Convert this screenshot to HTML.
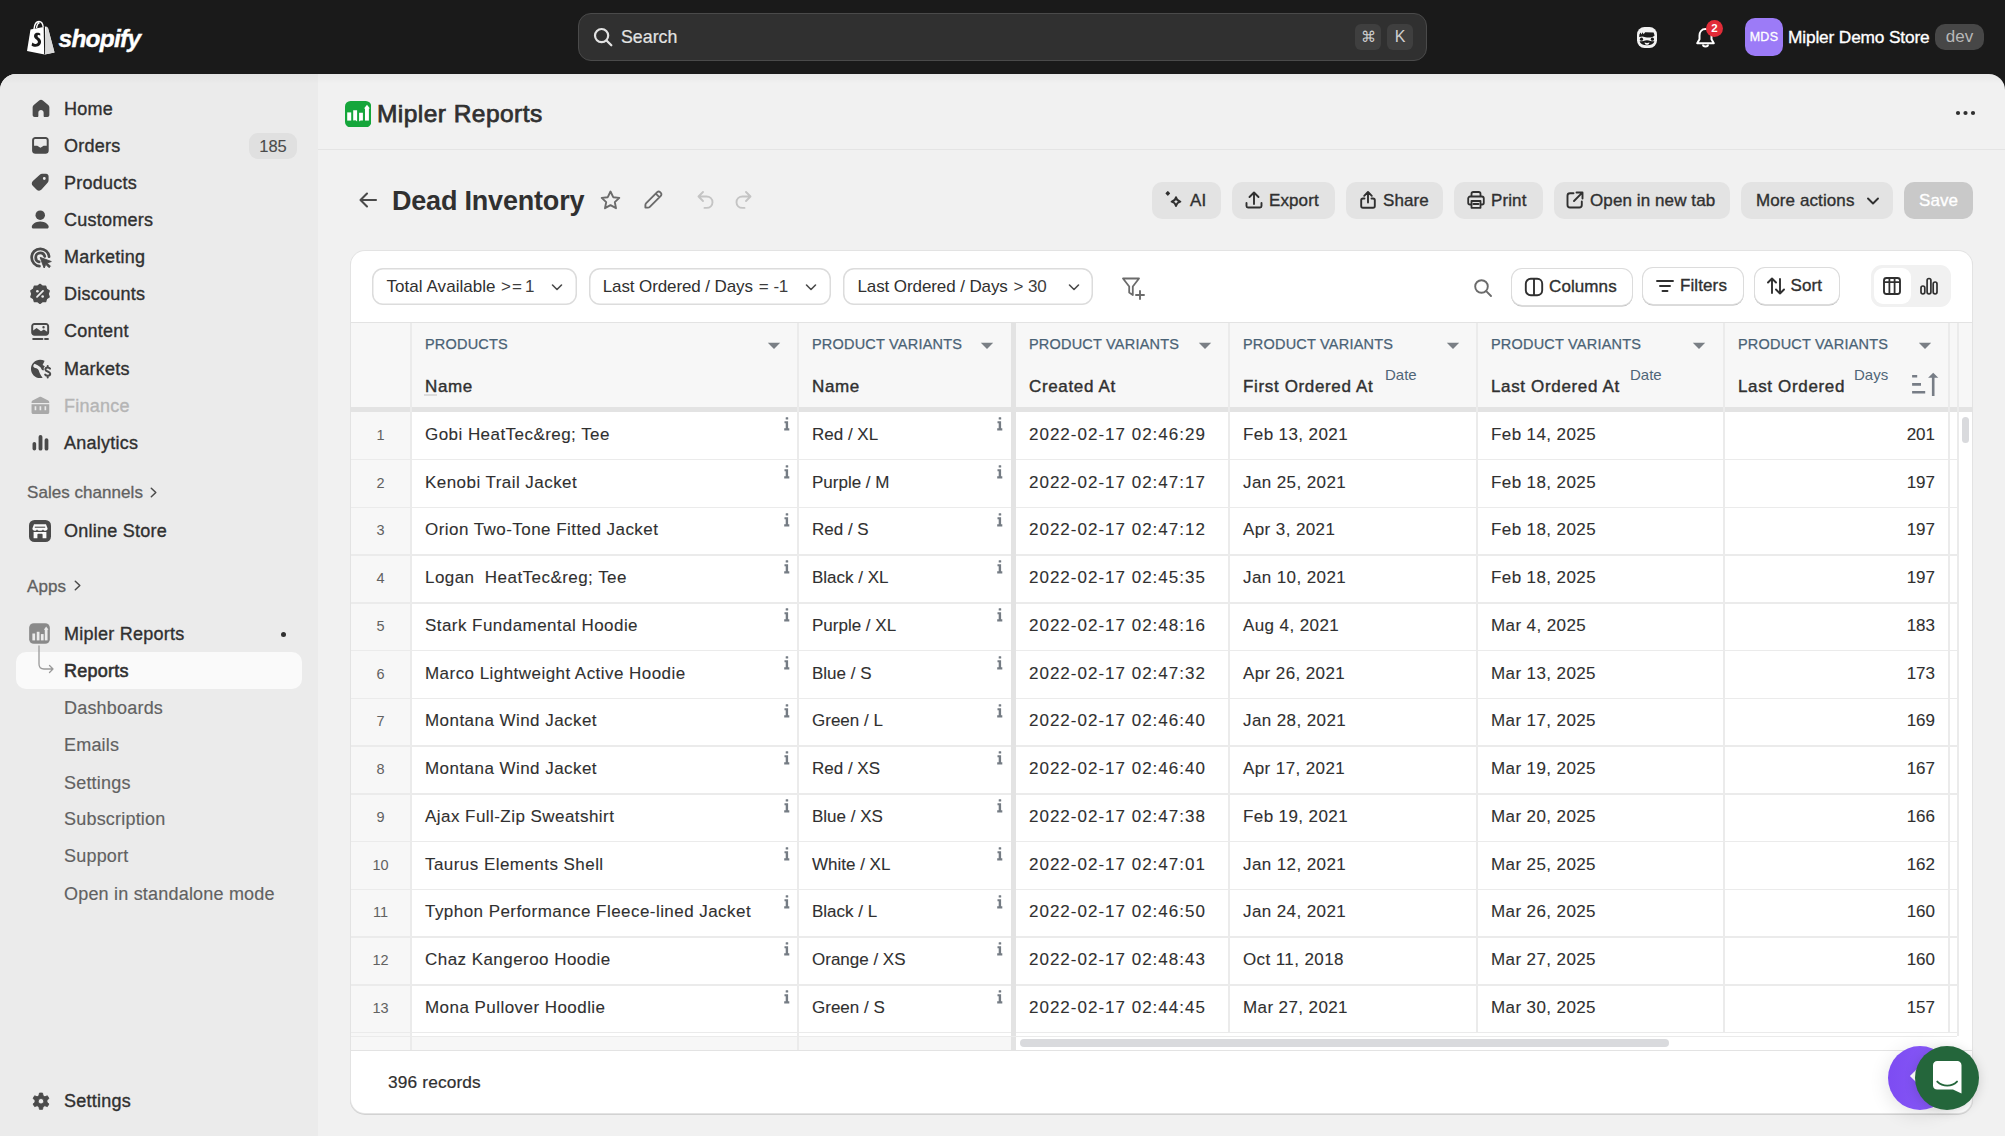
<!DOCTYPE html>
<html><head><meta charset="utf-8">
<style>
*{box-sizing:border-box;margin:0;padding:0}
html,body{width:2005px;height:1136px;overflow:hidden;background:#1a1a1a;font-family:"Liberation Sans",sans-serif;color:#303030}
.abs{position:absolute}
#top{position:absolute;left:0;top:0;width:2005px;height:74px;background:#1a1a1a}
#frame{position:absolute;left:0;top:74px;width:2005px;height:1062px;background:#f1f1f1;border-radius:16px 16px 0 0;overflow:hidden}
#side{position:absolute;left:0;top:0;width:318px;height:1062px;background:#ebebeb}
.nav{position:absolute;left:0;height:37px;line-height:37px;font-size:18px;color:#303030;-webkit-text-stroke:0.35px #303030;white-space:nowrap}
.nav .lbl{position:absolute;left:64px;top:0.8px;letter-spacing:0.25px}
.nav svg{position:absolute;left:29.5px;top:7px;width:22px;height:22px}
.sub{position:absolute;left:64px;height:37px;line-height:38.8px;font-size:18px;letter-spacing:0.2px;color:#616161;white-space:nowrap;-webkit-text-stroke:0.15px #616161}
.sec{position:absolute;left:27px;height:30px;line-height:30px;font-size:17px;color:#616161;-webkit-text-stroke:0.3px #616161;white-space:nowrap;letter-spacing:0.05px}
.btn{position:absolute;top:182px;height:37px;border-radius:10px;background:#e3e3e3;color:#303030;font-size:17px;-webkit-text-stroke:0.35px #303030;white-space:nowrap}
.btn span{position:absolute;top:0;line-height:37px;letter-spacing:0.1px}
.btn svg{position:absolute;top:6.7px}
.pill{position:absolute;top:17px;height:37px;border-radius:11px;box-shadow:inset 0 0 0 1.5px #dcdcdc;background:#fff;color:#303030;font-size:17px;white-space:nowrap}
.pill span{position:absolute;top:0;line-height:37px;letter-spacing:-0.1px}
.pill .op{letter-spacing:-0.3px;color:#3d3d3d}
.pill svg{position:absolute;top:11.5px}
.tb{position:absolute;top:17.5px;height:36px;border-radius:10px;background:#fff;box-shadow:0 0 0 1px #dcdcdc, 0 1px 0 0.6px #b5b5b5;color:#303030;font-size:17px;-webkit-text-stroke:0.35px #303030;white-space:nowrap}
.tb span{position:absolute;top:0;line-height:36px;letter-spacing:0.1px}
.tb svg{position:absolute;top:7px}
.rn{position:absolute;left:0;width:59px;text-align:center;line-height:36px;font-size:14.5px;color:#616161}
.td{position:absolute;line-height:36px;font-size:17px;color:#303030;white-space:nowrap;-webkit-text-stroke:0.1px #303030}
.nm{letter-spacing:0.45px}
.dt{letter-spacing:1.0px}
.dd{letter-spacing:0.4px}
.ii{position:absolute;fill:#757c84}
.hl{position:absolute;left:0;width:1606px;height:1.5px;background:#ebebeb}
.vl{position:absolute;width:1.5px;background:#ebebeb}
.th1{position:absolute;line-height:36px;font-size:14.5px;color:#4a6275;letter-spacing:0.2px;-webkit-text-stroke:0.25px #4a6275;white-space:nowrap}
.th2{position:absolute;line-height:36px;font-size:17px;color:#303030;-webkit-text-stroke:0.4px #303030;letter-spacing:0.65px;white-space:nowrap}
.sup{position:absolute;line-height:36px;font-size:15px;color:#4f6678;white-space:nowrap;letter-spacing:0px}
</style></head>
<body>
<div id="top">
  <svg class="abs" style="left:25px;top:20px" width="32" height="35" viewBox="0 0 32 35">
    <path d="M2 31 L5.5 9.5 L21 6.5 L23 8 L29.5 32.5 L19.5 34.5 Z" fill="#fff"/>
    <path d="M19.3 6.6 L19.8 34.3" stroke="#1a1a1a" stroke-width="1.3" fill="none"/>
    <path d="M21 6.5 L23 8 L29.5 32.5 L20 34.4 Z" fill="#d8d8d8"/>
    <path d="M9 9 C9.5 4 11.5 1.5 14 1.5 C16.5 1.5 17.8 3.5 18.2 7 M11.5 8 C12 4.5 13.2 3 14.5 3" stroke="#fff" stroke-width="1.4" fill="none"/>
    <path d="M15.2 13.6 C14.5 12.8 12.9 12.4 11.5 12.8 C9.2 13.5 8.4 16 9.5 17.8 C10.4 19.2 12.6 19.8 12.9 21.6 C13.2 23.4 11.2 24.4 9.5 23.8 C8.6 23.5 7.9 23 7.4 22.4 L6.5 25.4 C7.3 26.3 9.2 26.9 10.8 26.8 C14.2 26.6 16.4 24.2 16 21 C15.7 18.6 13.2 17.6 12.6 16.4 C12.2 15.5 12.8 14.9 13.8 15 C14.5 15 15 15.3 15.3 15.6 Z" fill="#1a1a1a"/>
  </svg>
  <div class="abs" style="left:58.5px;top:20.5px;font-size:24.5px;line-height:36px;font-weight:bold;font-style:italic;color:#fff;letter-spacing:-0.75px;-webkit-text-stroke:0.4px #fff">shopify</div>

  <div class="abs" style="left:578px;top:13px;width:849px;height:48px;border-radius:13px;background:#303030;border:1.5px solid #4a4a4a"></div>
  <svg class="abs" style="left:593px;top:27px" width="21" height="21" viewBox="0 0 21 21"><circle cx="8.6" cy="8.6" r="6.6" stroke="#e3e3e3" stroke-width="2.2" fill="none"/><path d="M13.5 13.5 L18.3 18.3" stroke="#e3e3e3" stroke-width="2.3" stroke-linecap="round"/></svg>
  <div class="abs" style="left:621px;top:19px;line-height:36px;font-size:17.8px;color:#e3e3e3;-webkit-text-stroke:0.2px #e3e3e3">Search</div>
  <div class="abs" style="left:1355px;top:24px;width:26px;height:26px;border-radius:6px;background:#3f3f3f;color:#d0d0d0;font-size:15px;line-height:26px;text-align:center">&#8984;</div>
  <div class="abs" style="left:1387px;top:24px;width:26px;height:26px;border-radius:6px;background:#3f3f3f;color:#d0d0d0;font-size:16px;line-height:26px;text-align:center">K</div>

  <svg class="abs" style="left:1637px;top:26.5px" width="20" height="21" viewBox="0 0 20 21"><rect x="0" y="0" width="20" height="21" rx="7.5" fill="#f2f2f2"/><path d="M2.2 10 L2.4 7.6 L3.6 5.4 L4.5 7.4 L5.6 5.3 L6.6 7.2 L8.2 5.2 L16.6 5.5 L17.6 8.4 C15.5 10.6 11.5 11.1 8.6 10.2 L5.5 9.6 Z" fill="#1a1a1a"/><circle cx="4.5" cy="12.2" r="1.6" fill="#1a1a1a"/><circle cx="15.4" cy="12.2" r="1.6" fill="#1a1a1a"/><path d="M2.6 14.3 C5 14.6 7.3 13.4 10 13.2 C12.7 13.4 15 14.6 17.4 14.3 C16.8 17 14 18.3 10 18.3 C6 18.3 3.2 17 2.6 14.3 Z" fill="#1a1a1a"/><path d="M7.5 15.5 C8.5 16 11.5 16 12.5 15.5 C12.3 17.1 11.3 17.8 10 17.8 C8.7 17.8 7.7 17.1 7.5 15.5 Z" fill="#f2f2f2"/></svg>
  <svg class="abs" style="left:1694px;top:26px" width="24" height="24" viewBox="0 0 24 24">
    <path d="M11.5 3 C7.5 3 5.5 6.3 5.5 9.5 L5.5 13.2 L3.2 17.2 L19.8 17.2 L17.5 13.2 L17.5 9.5 C17.5 6.3 15.5 3 11.5 3 Z" fill="none" stroke="#fff" stroke-width="2" stroke-linejoin="round"/>
    <path d="M9 18.5 C9 21 14 21 14 18.5" fill="none" stroke="#fff" stroke-width="2"/>
  </svg>
  <div class="abs" style="left:1706px;top:20px;width:17px;height:17px;border-radius:50%;background:#e22c38;border:0px solid #1a1a1a;color:#fff;font-size:11.5px;font-weight:bold;line-height:17px;text-align:center">2</div>
  <div class="abs" style="left:1745px;top:18px;width:38px;height:38px;border-radius:10px;background:#9c7bf7;color:#fff;font-size:12.5px;line-height:38px;text-align:center;letter-spacing:0.3px;-webkit-text-stroke:0.3px #fff">MDS</div>
  <div class="abs" style="left:1788px;top:19px;line-height:36px;font-size:17.3px;color:#fff;-webkit-text-stroke:0.35px #fff;white-space:nowrap;letter-spacing:-0.15px">Mipler Demo Store</div>
  <div class="abs" style="left:1935px;top:24px;width:49px;height:26px;border-radius:10px;background:#474747;color:#b8b8b8;font-size:17px;line-height:26px;text-align:center">dev</div>
</div>
<div id="frame">
  <div id="side">
    <!-- centers (page y): 108.8 + 37.12*i ; frame top 74 -->
    <div class="nav" style="top:16px"><svg viewBox="0 0 20 20"><path d="M10 2.6 C9.4 2.6 8.8 2.8 8.3 3.2 L3.2 7.6 C2.7 8.1 2.4 8.7 2.4 9.4 L2.4 16.4 C2.4 17.4 3.2 18.2 4.2 18.2 L6.6 18.2 C7.2 18.2 7.6 17.7 7.6 17.2 L7.6 14.3 C7.6 13 8.7 11.9 10 11.9 C11.3 11.9 12.4 13 12.4 14.3 L12.4 17.2 C12.4 17.7 12.8 18.2 13.4 18.2 L15.8 18.2 C16.8 18.2 17.6 17.4 17.6 16.4 L17.6 9.4 C17.6 8.7 17.3 8.1 16.8 7.6 L11.7 3.2 C11.2 2.8 10.6 2.6 10 2.6 Z" fill="#4a4a4a"/></svg><span class="lbl">Home</span></div>
    <div class="nav" style="top:53.2px"><svg viewBox="0 0 20 20"><path d="M4.8 2.7 L14.2 2.7 C15.8 2.7 17 3.9 17 5.5 L17 15.2 C17 16.8 15.8 18 14.2 18 L4.8 18 C3.2 18 1.9 16.8 1.9 15.2 L1.9 5.5 C1.9 3.9 3.2 2.7 4.8 2.7 Z M3.7 10.6 L6.6 10.6 L9.5 12.6 L12.4 10.6 L15.2 10.6 L15.2 5.6 C15.2 5 14.7 4.5 14.1 4.5 L4.9 4.5 C4.3 4.5 3.7 5 3.7 5.6 Z" fill="#4a4a4a" fill-rule="evenodd"/></svg><span class="lbl">Orders</span>
      <div class="abs" style="left:249px;top:5.5px;width:48px;height:26px;border-radius:9px;background:#e0e0e0;color:#4a4a4a;font-size:16.5px;line-height:26px;text-align:center;-webkit-text-stroke:0.1px #4a4a4a">185</div></div>
    <div class="nav" style="top:90.3px"><svg viewBox="0 0 20 20"><path d="M11 2.6 L14.6 2.6 C15.9 2.6 16.9 3.6 16.9 4.9 L16.9 8.5 C16.9 9.3 16.6 10 16 10.6 L10.5 16.9 C9.3 18.2 7.3 18.2 6.1 17 L2.5 13.4 C1.3 12.2 1.3 10.2 2.6 9 L8.9 3.5 C9.5 2.9 10.2 2.6 11 2.6 Z M13 5.5 A1.3 1.3 0 1 0 13 8.1 A1.3 1.3 0 1 0 13 5.5 Z" fill="#4a4a4a" fill-rule="evenodd"/></svg><span class="lbl">Products</span></div>
    <div class="nav" style="top:127.4px"><svg viewBox="0 0 20 20"><circle cx="9.3" cy="6.5" r="4.3" fill="#4a4a4a"/><path d="M9.3 12.2 C4.8 12.2 1.6 14.8 1.6 17.3 C1.6 18.1 2.2 18.7 3 18.7 L15.6 18.7 C16.4 18.7 17 18.1 17 17.3 C17 14.8 13.8 12.2 9.3 12.2 Z" fill="#4a4a4a"/></svg><span class="lbl">Customers</span></div>
    <div class="nav" style="top:164.5px"><svg viewBox="0 0 20 20"><path d="M8.6 18.3 C4.6 17.9 1.5 14.5 1.5 10.4 C1.5 6 5 2.5 9.4 2.5 C13.5 2.5 16.9 5.6 17.3 9.6" stroke="#4a4a4a" stroke-width="2.5" fill="none" stroke-linecap="round"/><path d="M8.3 14.5 C6.5 14.1 5.2 12.5 5.2 10.5 C5.2 8.2 7 6.3 9.3 6.3 C11.3 6.3 12.9 7.6 13.4 9.4" stroke="#4a4a4a" stroke-width="2.5" fill="none" stroke-linecap="round"/><path d="M9.2 10.3 L19.4 14.1 L15.6 15.4 L18.6 18.4 L17.3 19.7 L14.3 16.7 L12.9 20.3 Z" fill="#4a4a4a" stroke="#4a4a4a" stroke-width="0.8" stroke-linejoin="round"/></svg><span class="lbl">Marketing</span></div>
    <div class="nav" style="top:201.6px"><svg viewBox="0 0 20 20"><path d="M9.1 1.3 L11.4 3 L14.2 2.9 L15 5.6 L17.4 7.2 L16.5 9.9 L17.4 12.6 L15 14.2 L14.2 16.9 L11.4 16.8 L9.1 18.5 L6.8 16.8 L4 16.9 L3.2 14.2 L0.8 12.6 L1.7 9.9 L0.8 7.2 L3.2 5.6 L4 2.9 L6.8 3 Z" fill="#4a4a4a" stroke="#4a4a4a" stroke-width="1.3" stroke-linejoin="round"/><path d="M6.4 12.6 L11.8 7.2" stroke="#ebebeb" stroke-width="1.7" stroke-linecap="round"/><circle cx="6.7" cy="7.5" r="1.2" fill="#ebebeb"/><circle cx="11.5" cy="12.3" r="1.2" fill="#ebebeb"/></svg><span class="lbl">Discounts</span></div>
    <div class="nav" style="top:238.7px"><svg viewBox="0 0 20 20"><path d="M4 2.7 L14.5 2.7 C16.1 2.7 17.4 4 17.4 5.6 L17.4 11.4 C17.4 13 16.1 14.3 14.5 14.3 L4 14.3 C2.4 14.3 1.1 13 1.1 11.4 L1.1 5.6 C1.1 4 2.4 2.7 4 2.7 Z M2.9 9.6 L6 7.2 L10 10.2 L12.6 8.6 L15.6 10.6 L15.6 5.6 C15.6 5 15.1 4.5 14.5 4.5 L4 4.5 C3.4 4.5 2.9 5 2.9 5.6 Z M12.3 5.5 A1.1 1.1 0 1 0 12.3 7.7 A1.1 1.1 0 1 0 12.3 5.5 Z" fill="#4a4a4a" fill-rule="evenodd"/><rect x="2" y="16.4" width="10.2" height="1.7" rx="0.85" fill="#4a4a4a"/><rect x="12.8" y="16.4" width="4.4" height="1.7" rx="0.85" fill="#4a4a4a"/></svg><span class="lbl">Content</span></div>
    <div class="nav" style="top:275.8px"><svg viewBox="0 0 20 20"><path d="M13.2 3.4 C12 2.8 10.6 2.5 9.2 2.5 C4.6 2.5 0.9 6.2 0.9 10.8 C0.9 15.4 4.6 19.1 9.2 19.1 C10 19.1 10.8 19 11.5 18.8 C10.5 17.6 9.7 16.3 9 15 C8 13 8.4 11.8 7 10.8 C5.6 9.8 3.6 10.2 3 8.6 C2.8 7.8 3.4 6.8 4.2 6.2 C6 7.4 8 7.8 9.5 9.4 C10.5 10.4 10.2 11.8 11.5 12 L12.8 12 C12.2 10.8 12.4 9.2 13.6 8.4 L11.4 7.2 C12 6 13 4.6 13.2 3.4 Z" fill="#4a4a4a"/><path d="M18.2 10.6 C17.7 9.9 17 9.6 16.1 9.6 C14.9 9.6 14 10.3 14 11.3 C14 13.4 18.4 12.9 18.4 15.3 C18.4 16.4 17.4 17.1 16.1 17.1 C15.1 17.1 14.3 16.7 13.8 16 M16.1 8.2 L16.1 9.6 M16.1 17.1 L16.1 18.6" stroke="#4a4a4a" stroke-width="1.8" fill="none" stroke-linecap="round"/></svg><span class="lbl">Markets</span></div>
    <div class="nav" style="top:312.9px;color:#b5b5b5;-webkit-text-stroke:0.35px #b5b5b5"><svg viewBox="0 0 20 20"><path d="M9.4 2.5 C9.7 2.5 10 2.6 10.3 2.7 L16.6 6 C17.1 6.3 17.5 6.8 17.5 7.4 L17.5 8.2 L1.4 8.2 L1.4 7.4 C1.4 6.8 1.7 6.3 2.3 6 L8.5 2.7 C8.8 2.6 9.1 2.5 9.4 2.5 Z" fill="#a9a9a9"/><path d="M1.4 9.4 L17.5 9.4 L17.5 16.6 C17.5 17.5 16.8 18.2 15.9 18.2 L3 18.2 C2.1 18.2 1.4 17.5 1.4 16.6 Z M4.2 11.2 L4.2 14.8 L5.7 14.8 L5.7 11.2 Z M8.7 11.2 L8.7 14.8 L10.2 14.8 L10.2 11.2 Z M13.2 11.2 L13.2 14.8 L14.7 14.8 L14.7 11.2 Z" fill="#a9a9a9" fill-rule="evenodd"/></svg><span class="lbl">Finance</span></div>
    <div class="nav" style="top:350px"><svg viewBox="0 0 20 20"><rect x="2.3" y="10" width="3.3" height="7.8" rx="1.65" fill="#4a4a4a"/><rect x="7.8" y="3.6" width="3.5" height="14.2" rx="1.75" fill="#4a4a4a"/><rect x="13.3" y="6.5" width="3.4" height="11.3" rx="1.7" fill="#4a4a4a"/></svg><span class="lbl">Analytics</span></div>

    <div class="sec" style="top:403.7px">Sales channels</div><svg class="abs" style="left:150px;top:413.4px" width="8" height="11" viewBox="0 0 8 11"><path d="M1.3 1.2 L5.8 5.5 L1.3 9.8" stroke="#4a4a4a" stroke-width="1.5" fill="none" stroke-linecap="round" stroke-linejoin="round"/></svg>
    <div class="nav" style="top:438px"><svg viewBox="0 0 22 22" style="left:28.8px;top:7.5px;width:22px;height:22px"><rect x="0" y="0" width="22" height="22" rx="5.5" fill="#4a4a4a"/><path d="M5 4.3 L17 4.3 L18.6 8.6 C18.6 9.9 17.6 10.8 16.4 10.8 C15.3 10.8 14.4 10.1 14 9.2 C13.6 10.1 12.6 10.8 11 10.8 C9.4 10.8 8.4 10.1 8 9.2 C7.6 10.1 6.7 10.8 5.6 10.8 C4.4 10.8 3.4 9.9 3.4 8.6 Z" fill="#fafafa"/><path d="M5.8 7.2 L16.2 7.2" stroke="#4a4a4a" stroke-width="1.1"/><path d="M4.6 12 L17.4 12 L17.4 18.3 L13.6 18.3 L13.6 14.6 C13.6 14.1 13.2 13.8 12.8 13.8 L9.2 13.8 C8.8 13.8 8.4 14.1 8.4 14.6 L8.4 18.3 L4.6 18.3 Z" fill="#fafafa"/></svg><span class="lbl">Online Store</span></div>

    <div class="sec" style="top:497.5px">Apps</div><svg class="abs" style="left:74.2px;top:506.20000000000005px" width="8" height="11" viewBox="0 0 8 11"><path d="M1.3 1.2 L5.8 5.5 L1.3 9.8" stroke="#4a4a4a" stroke-width="1.5" fill="none" stroke-linecap="round" stroke-linejoin="round"/></svg>
    <div class="nav" style="top:541px"><svg viewBox="0 0 20 20" style="left:28px;top:7px;width:23px;height:23px"><rect x="1" y="1" width="18" height="18" rx="4" fill="#8a8a8a"/><rect x="3.8" y="10" width="2.4" height="6" fill="#ebebeb"/><rect x="7.6" y="8.5" width="2.4" height="7.5" fill="#ebebeb"/><rect x="11.2" y="10.5" width="2.4" height="5.5" fill="#ebebeb"/><rect x="14.6" y="6" width="2.4" height="10" fill="#ebebeb"/><path d="M13.8 6.8 L15.8 4 L17.8 6.8 Z" fill="#ebebeb"/></svg><span class="lbl">Mipler Reports</span>
      <div class="abs" style="left:281px;top:17px;width:5px;height:5px;border-radius:50%;background:#303030"></div></div>
    <div class="abs" style="left:16px;top:578px;width:286px;height:37px;border-radius:10px;background:#fafafa"></div>
    <svg class="abs" style="left:36px;top:570px" width="20" height="30" viewBox="0 0 20 30"><path d="M3 2 L3 20 C3 23 5 25 8 25 L17 25 M13.5 21.5 L17 25 L13.5 28.5" stroke="#9a9a9a" stroke-width="1.3" fill="none" stroke-linecap="round" stroke-linejoin="round"/></svg>
    <div class="nav" style="top:578px;-webkit-text-stroke:0.6px #303030;color:#303030"><span class="lbl">Reports</span></div>
    <div class="sub" style="top:615.3px">Dashboards</div>
    <div class="sub" style="top:652.3px">Emails</div>
    <div class="sub" style="top:689.5px">Settings</div>
    <div class="sub" style="top:726.2px">Subscription</div>
    <div class="sub" style="top:763.2px">Support</div>
    <div class="sub" style="top:800.5px">Open in standalone mode</div>

    <div class="nav" style="top:1008.5px"><svg viewBox="0 0 20 20"><path d="M8.6 1.8 L11.4 1.8 L11.9 4.2 C12.5 4.4 13 4.7 13.5 5.1 L15.8 4.3 L17.2 6.7 L15.4 8.3 C15.5 8.9 15.5 9.5 15.4 10.1 L17.2 11.7 L15.8 14.1 L13.5 13.3 C13 13.7 12.5 14 11.9 14.2 L11.4 16.6 L8.6 16.6 L8.1 14.2 C7.5 14 7 13.7 6.5 13.3 L4.2 14.1 L2.8 11.7 L4.6 10.1 C4.5 9.5 4.5 8.9 4.6 8.3 L2.8 6.7 L4.2 4.3 L6.5 5.1 C7 4.7 7.5 4.4 8.1 4.2 Z M10 6.7 A2.5 2.5 0 1 0 10 11.7 A2.5 2.5 0 1 0 10 6.7 Z" fill="#4a4a4a" fill-rule="evenodd" transform="translate(0 1)" stroke="#4a4a4a" stroke-width="0.8" stroke-linejoin="round"/></svg><span class="lbl">Settings</span></div>
  </div>
</div>
<div class="abs topshade" style="left:0;top:74px;width:2005px;height:10px;border-radius:16px 16px 0 0;background:linear-gradient(rgba(0,0,0,0.035),rgba(0,0,0,0))"></div>
<div id="main" class="abs" style="left:0;top:0;width:2005px;height:1136px">
  <!-- app header -->
  <div class="abs" style="left:318px;top:148.5px;width:1687px;height:1px;background:#e4e4e4"></div>
  <svg class="abs" style="left:345px;top:100.8px" width="26.3" height="26.4" viewBox="0 0 26.3 26.4">
    <rect x="0" y="0" width="26.3" height="26.4" rx="5.5" fill="#15a63b"/>
    <rect x="2.2" y="11.4" width="4" height="8.2" fill="#fff"/>
    <path d="M8.2 9.2 L12.1 9.2 L12.1 20.5 L10.5 19.3 L8.2 19.6 Z" fill="#fff"/>
    <path d="M14.1 11.8 L17.9 11.8 L17.9 19.6 L15.6 19.4 L14.1 20.5 Z" fill="#fff"/>
    <rect x="20" y="7" width="3.9" height="12.6" fill="#fff"/>
    <path d="M19 7.6 L22 3.8 L24.9 7.6 Z" fill="#fff"/>
  </svg>
  <div class="abs" style="left:377px;top:96px;line-height:36px;font-size:24.5px;color:#303030;white-space:nowrap;letter-spacing:0.45px;-webkit-text-stroke:0.75px #303030">Mipler Reports</div>
  <svg class="abs" style="left:1954px;top:108px" width="24" height="10" viewBox="0 0 24 10"><circle cx="4" cy="5" r="2.1" fill="#303030"/><circle cx="11.5" cy="5" r="2.1" fill="#303030"/><circle cx="19" cy="5" r="2.1" fill="#303030"/></svg>

  <!-- title row -->
  <svg class="abs" style="left:357px;top:189px" width="22" height="22" viewBox="0 0 22 22"><path d="M19 11 L4 11 M10 4.5 L3.5 11 L10 17.5" stroke="#4a4a4a" stroke-width="2.1" fill="none" stroke-linecap="round" stroke-linejoin="round"/></svg>
  <div class="abs" style="left:392px;top:183px;line-height:36px;font-size:27px;font-weight:bold;color:#303030;white-space:nowrap;letter-spacing:-0.2px">Dead Inventory</div>
  <svg class="abs" style="left:599px;top:189px" width="23" height="22" viewBox="0 0 23 22"><path d="M11.5 2.5 L14.2 8.2 L20.3 8.9 L15.8 13.1 L17 19.2 L11.5 16.1 L6 19.2 L7.2 13.1 L2.7 8.9 L8.8 8.2 Z" fill="none" stroke="#6b6b6b" stroke-width="1.9" stroke-linejoin="round"/></svg>
  <svg class="abs" style="left:642px;top:189px" width="22" height="22" viewBox="0 0 22 22"><path d="M15.2 3.2 C16 2.4 17.3 2.4 18.1 3.2 L18.8 3.9 C19.6 4.7 19.6 6 18.8 6.8 L7.8 17.8 C7.3 18.3 6.6 18.6 5.9 18.6 L3.4 18.6 L3.4 16.1 C3.4 15.4 3.7 14.7 4.2 14.2 Z M13.8 4.7 L17.3 8.2" fill="none" stroke="#6b6b6b" stroke-width="1.9" stroke-linejoin="round"/></svg>
  <svg class="abs" style="left:695px;top:189px" width="22" height="22" viewBox="0 0 22 22"><path d="M8 3 L3.5 7.5 L8 12 M3.5 7.5 L11.5 7.5 C15 7.5 17.5 10 17.5 13.2 C17.5 16.4 15 18.9 11.5 18.9 L9.5 18.9" fill="none" stroke="#c4c4c4" stroke-width="1.9" stroke-linecap="round" stroke-linejoin="round"/></svg>
  <svg class="abs" style="left:732px;top:189px" width="22" height="22" viewBox="0 0 22 22"><path d="M14 3 L18.5 7.5 L14 12 M18.5 7.5 L10.5 7.5 C7 7.5 4.5 10 4.5 13.2 C4.5 16.4 7 18.9 10.5 18.9 L12.5 18.9" fill="none" stroke="#c4c4c4" stroke-width="1.9" stroke-linecap="round" stroke-linejoin="round"/></svg>

  <!-- action buttons -->
  <div class="btn" style="left:1152px;width:69px"><svg style="left:11px" width="24" height="22" viewBox="0 0 24 22"><rect x="3" y="2.6" width="3.6" height="3.6" rx="0.6" transform="rotate(45 4.8 4.4)" fill="#303030"/><path d="M13 8.2 C13.6 11 14.6 12 17.4 12.6 C14.6 13.2 13.6 14.2 13 17 C12.4 14.2 11.4 13.2 8.6 12.6 C11.4 12 12.4 11 13 8.2 Z" fill="none" stroke="#303030" stroke-width="1.9" stroke-linejoin="round"/></svg><span style="left:38px">AI</span></div>
  <div class="btn" style="left:1232px;width:103px"><svg style="left:11px" width="22" height="22" viewBox="0 0 22 22"><path d="M11 15 L11 3.5 M6.5 8 L11 3.5 L15.5 8 M3.5 14 L3.5 17 C3.5 17.8 4.2 18.5 5 18.5 L17 18.5 C17.8 18.5 18.5 17.8 18.5 17 L18.5 14" fill="none" stroke="#303030" stroke-width="1.9" stroke-linecap="round" stroke-linejoin="round"/></svg><span style="left:37px">Export</span></div>
  <div class="btn" style="left:1346px;width:97px"><svg style="left:11px" width="22" height="22" viewBox="0 0 22 22"><path d="M11 13.5 L11 3 M7.2 6.8 L11 3 L14.8 6.8 M7.5 9.5 L6 9.5 C5 9.5 4.2 10.3 4.2 11.3 L4.2 17 C4.2 18 5 18.8 6 18.8 L16 18.8 C17 18.8 17.8 18 17.8 17 L17.8 11.3 C17.8 10.3 17 9.5 16 9.5 L14.5 9.5" fill="none" stroke="#303030" stroke-width="1.9" stroke-linecap="round" stroke-linejoin="round"/></svg><span style="left:37px">Share</span></div>
  <div class="btn" style="left:1454px;width:89px"><svg style="left:11px" width="22" height="22" viewBox="0 0 22 22"><path d="M6.5 7.5 L6.5 4.8 C6.5 3.8 7.3 3 8.3 3 L13.7 3 C14.7 3 15.5 3.8 15.5 4.8 L15.5 7.5 M6.5 15.5 L5 15.5 C4 15.5 3.2 14.7 3.2 13.7 L3.2 9.5 C3.2 8.4 4.1 7.5 5.2 7.5 L16.8 7.5 C17.9 7.5 18.8 8.4 18.8 9.5 L18.8 13.7 C18.8 14.7 18 15.5 17 15.5 L15.5 15.5 M6.5 12 L15.5 12 L15.5 18.8 L6.5 18.8 Z M8.5 15 L13.5 15" fill="none" stroke="#303030" stroke-width="1.8" stroke-linecap="round" stroke-linejoin="round"/></svg><span style="left:37px">Print</span></div>
  <div class="btn" style="left:1554px;width:176px"><svg style="left:10px" width="22" height="22" viewBox="0 0 22 22"><path d="M9.5 4.2 L6 4.2 C4.6 4.2 3.5 5.3 3.5 6.7 L3.5 16 C3.5 17.4 4.6 18.5 6 18.5 L15.3 18.5 C16.7 18.5 17.8 17.4 17.8 16 L17.8 12.5 M12.5 3.5 L18.5 3.5 L18.5 9.5 M18.3 3.7 L10 12" fill="none" stroke="#303030" stroke-width="1.9" stroke-linecap="round" stroke-linejoin="round"/></svg><span style="left:36px">Open in new tab</span></div>
  <div class="btn" style="left:1741px;width:152px"><span style="left:15px">More actions</span><svg style="left:124px" width="16" height="22" viewBox="0 0 16 22"><path d="M3 9.5 L8 14.5 L13 9.5" fill="none" stroke="#303030" stroke-width="1.9" stroke-linecap="round" stroke-linejoin="round"/></svg></div>
  <div class="btn" style="left:1904px;width:69px;background:#c9c9c9;color:#fff;-webkit-text-stroke:0.35px #fff"><span style="left:15px">Save</span></div>
  <!-- CARD -->
  <div id="card" class="abs" style="left:351px;top:251px;width:1621px;height:861.8px;background:#fff;border-radius:14px;box-shadow:0 0 0 1px #e3e3e3, 0 1px 0 1px #d2d2d2;overflow:hidden">
    <!-- filter pills -->
    <div class="pill" style="left:21px;width:205px"><span style="left:14.5px;letter-spacing:0.05px">Total Available</span><span class="op" style="left:129px">&gt;</span><span class="op" style="left:140px">=</span><span class="op" style="left:153px">1</span><svg style="left:177.5px" width="14" height="14" viewBox="0 0 14 14"><path d="M2.5 5 L7 9.5 L11.5 5" fill="none" stroke="#4a4a4a" stroke-width="1.6" stroke-linecap="round" stroke-linejoin="round"/></svg></div>
    <div class="pill" style="left:237.7px;width:242.3px"><span style="left:14px">Last Ordered / Days</span><span class="op" style="left:170px">=</span><span class="op" style="left:184.8px">-1</span><svg style="left:215.5px" width="14" height="14" viewBox="0 0 14 14"><path d="M2.5 5 L7 9.5 L11.5 5" fill="none" stroke="#4a4a4a" stroke-width="1.6" stroke-linecap="round" stroke-linejoin="round"/></svg></div>
    <div class="pill" style="left:492px;width:250px"><span style="left:14.5px">Last Ordered / Days</span><span class="op" style="left:170.5px">&gt;</span><span class="op" style="left:185px">30</span><svg style="left:223.5px" width="14" height="14" viewBox="0 0 14 14"><path d="M2.5 5 L7 9.5 L11.5 5" fill="none" stroke="#4a4a4a" stroke-width="1.6" stroke-linecap="round" stroke-linejoin="round"/></svg></div>
    <svg class="abs" style="left:769px;top:24px" width="28" height="26" viewBox="0 0 28 26"><path d="M3 3.5 L19 3.5 L12.8 11.5 L12.8 20 L9.2 17.5 L9.2 11.5 Z" fill="none" stroke="#6b6b6b" stroke-width="1.8" stroke-linejoin="round"/><path d="M20 16 L20 24 M16 20 L24 20" stroke="#6b6b6b" stroke-width="1.9" stroke-linecap="round"/></svg>

    <!-- toolbar right -->
    <svg class="abs" style="left:1121px;top:26px" width="22" height="22" viewBox="0 0 22 22"><circle cx="9.5" cy="9.5" r="6.3" fill="none" stroke="#6b6b6b" stroke-width="1.9"/><path d="M14.2 14.2 L19 19" stroke="#6b6b6b" stroke-width="1.9" stroke-linecap="round"/></svg>
    <div class="tb" style="left:1161px;width:120px"><svg style="left:11px" width="22" height="22" viewBox="0 0 22 22"><rect x="2.8" y="2.8" width="16.4" height="16.4" rx="5" fill="none" stroke="#303030" stroke-width="1.9"/><path d="M11 3 L11 19" stroke="#303030" stroke-width="1.9"/></svg><span style="left:37px">Columns</span></div>
    <div class="tb" style="left:1292px;width:100px;top:16.7px"><svg style="left:11px" width="22" height="22" viewBox="0 0 22 22"><path d="M3 6 L19 6 M6 11 L16 11 M8.5 16 L13.5 16" stroke="#303030" stroke-width="1.9" stroke-linecap="round"/></svg><span style="left:37px">Filters</span></div>
    <div class="tb" style="left:1403.5px;width:84.5px;top:16.7px"><svg style="left:10px" width="22" height="22" viewBox="0 0 22 22"><path d="M7 18 L7 3.5 M3 7.5 L7 3.5 L11 7.5 M15 4 L15 18.5 M11 14.5 L15 18.5 L19 14.5" fill="none" stroke="#303030" stroke-width="1.9" stroke-linecap="round" stroke-linejoin="round"/></svg><span style="left:36px">Sort</span></div>
    <div class="abs" style="left:1520px;top:14px;width:80px;height:42px;border-radius:11px;background:#f1f1f1"></div>
    <div class="abs" style="left:1523px;top:17px;width:37px;height:36px;border-radius:9px;background:#fff"></div>
    <svg class="abs" style="left:1530px;top:24px" width="22" height="22" viewBox="0 0 22 22"><rect x="3" y="3" width="16" height="16" rx="2.5" fill="none" stroke="#303030" stroke-width="1.9"/><path d="M3 7.2 L19 7.2 M8.4 3 L8.4 19 M13.6 3 L13.6 19" stroke="#303030" stroke-width="1.8"/></svg>
    <svg class="abs" style="left:1567px;top:24px" width="22" height="22" viewBox="0 0 22 22"><rect x="3" y="11" width="3.8" height="8" rx="1.9" fill="none" stroke="#303030" stroke-width="1.7"/><rect x="9.1" y="3.5" width="3.8" height="15.5" rx="1.9" fill="none" stroke="#303030" stroke-width="1.7"/><rect x="15.2" y="7" width="3.8" height="12" rx="1.9" fill="none" stroke="#303030" stroke-width="1.7"/></svg>

    <!-- table header -->
    <div class="abs" style="left:0;top:71px;width:1621px;height:1px;background:#e3e3e3"></div>
    <div class="abs" style="left:0;top:72px;width:1621px;height:84px;background:#f7f7f7"></div>
    <div class="abs" style="left:0;top:156px;width:1621px;height:5px;background:#e3e3e3"></div>
    <!-- row number column bg -->
    <div class="abs" style="left:0;top:161px;width:59px;height:639px;background:#f7f7f7"></div>
    <!-- frozen footer area bg -->
    <div class="abs" style="left:0;top:785px;width:660px;height:14px;background:#f7f7f7"></div>
    <div class="rn" style="top:165.88px">1</div>
<div class="td nm" style="left:74px;top:165.88px">Gobi HeatTec&amp;reg; Tee</div>
<div class="td" style="left:461px;top:165.88px">Red / XL</div>
<div class="td dt" style="left:678px;top:165.88px">2022-02-17 02:46:29</div>
<div class="td dd" style="left:892px;top:165.88px">Feb 13, 2021</div>
<div class="td dd" style="left:1140px;top:165.88px">Feb 14, 2025</div>
<div class="td" style="right:37px;top:165.88px;text-align:right">201</div>
<svg class="ii" style="left:432.5px;top:166.20px" width="6" height="14" viewBox="0 0 6 14"><rect x="1.7" y="0.2" width="2.5" height="2.4" rx="0.4"/><path d="M0.5 4.2 L4.1 4.2 L4.1 11.2 L5.3 11.2 L5.3 13.4 L0.2 13.4 L0.2 11.2 L1.7 11.2 L1.7 6.2 L0.5 6.2 Z"/></svg>
<svg class="ii" style="left:645.5px;top:166.20px" width="6" height="14" viewBox="0 0 6 14"><rect x="1.7" y="0.2" width="2.5" height="2.4" rx="0.4"/><path d="M0.5 4.2 L4.1 4.2 L4.1 11.2 L5.3 11.2 L5.3 13.4 L0.2 13.4 L0.2 11.2 L1.7 11.2 L1.7 6.2 L0.5 6.2 Z"/></svg>
<div class="hl" style="top:207.75px"></div>
<div class="rn" style="top:213.62px">2</div>
<div class="td nm" style="left:74px;top:213.62px">Kenobi Trail Jacket</div>
<div class="td" style="left:461px;top:213.62px">Purple / M</div>
<div class="td dt" style="left:678px;top:213.62px">2022-02-17 02:47:17</div>
<div class="td dd" style="left:892px;top:213.62px">Jan 25, 2021</div>
<div class="td dd" style="left:1140px;top:213.62px">Feb 18, 2025</div>
<div class="td" style="right:37px;top:213.62px;text-align:right">197</div>
<svg class="ii" style="left:432.5px;top:213.95px" width="6" height="14" viewBox="0 0 6 14"><rect x="1.7" y="0.2" width="2.5" height="2.4" rx="0.4"/><path d="M0.5 4.2 L4.1 4.2 L4.1 11.2 L5.3 11.2 L5.3 13.4 L0.2 13.4 L0.2 11.2 L1.7 11.2 L1.7 6.2 L0.5 6.2 Z"/></svg>
<svg class="ii" style="left:645.5px;top:213.95px" width="6" height="14" viewBox="0 0 6 14"><rect x="1.7" y="0.2" width="2.5" height="2.4" rx="0.4"/><path d="M0.5 4.2 L4.1 4.2 L4.1 11.2 L5.3 11.2 L5.3 13.4 L0.2 13.4 L0.2 11.2 L1.7 11.2 L1.7 6.2 L0.5 6.2 Z"/></svg>
<div class="hl" style="top:255.50px"></div>
<div class="rn" style="top:261.38px">3</div>
<div class="td nm" style="left:74px;top:261.38px">Orion Two-Tone Fitted Jacket</div>
<div class="td" style="left:461px;top:261.38px">Red / S</div>
<div class="td dt" style="left:678px;top:261.38px">2022-02-17 02:47:12</div>
<div class="td dd" style="left:892px;top:261.38px">Apr 3, 2021</div>
<div class="td dd" style="left:1140px;top:261.38px">Feb 18, 2025</div>
<div class="td" style="right:37px;top:261.38px;text-align:right">197</div>
<svg class="ii" style="left:432.5px;top:261.70px" width="6" height="14" viewBox="0 0 6 14"><rect x="1.7" y="0.2" width="2.5" height="2.4" rx="0.4"/><path d="M0.5 4.2 L4.1 4.2 L4.1 11.2 L5.3 11.2 L5.3 13.4 L0.2 13.4 L0.2 11.2 L1.7 11.2 L1.7 6.2 L0.5 6.2 Z"/></svg>
<svg class="ii" style="left:645.5px;top:261.70px" width="6" height="14" viewBox="0 0 6 14"><rect x="1.7" y="0.2" width="2.5" height="2.4" rx="0.4"/><path d="M0.5 4.2 L4.1 4.2 L4.1 11.2 L5.3 11.2 L5.3 13.4 L0.2 13.4 L0.2 11.2 L1.7 11.2 L1.7 6.2 L0.5 6.2 Z"/></svg>
<div class="hl" style="top:303.25px"></div>
<div class="rn" style="top:309.12px">4</div>
<div class="td nm" style="left:74px;top:309.12px">Logan &nbsp;HeatTec&amp;reg; Tee</div>
<div class="td" style="left:461px;top:309.12px">Black / XL</div>
<div class="td dt" style="left:678px;top:309.12px">2022-02-17 02:45:35</div>
<div class="td dd" style="left:892px;top:309.12px">Jan 10, 2021</div>
<div class="td dd" style="left:1140px;top:309.12px">Feb 18, 2025</div>
<div class="td" style="right:37px;top:309.12px;text-align:right">197</div>
<svg class="ii" style="left:432.5px;top:309.45px" width="6" height="14" viewBox="0 0 6 14"><rect x="1.7" y="0.2" width="2.5" height="2.4" rx="0.4"/><path d="M0.5 4.2 L4.1 4.2 L4.1 11.2 L5.3 11.2 L5.3 13.4 L0.2 13.4 L0.2 11.2 L1.7 11.2 L1.7 6.2 L0.5 6.2 Z"/></svg>
<svg class="ii" style="left:645.5px;top:309.45px" width="6" height="14" viewBox="0 0 6 14"><rect x="1.7" y="0.2" width="2.5" height="2.4" rx="0.4"/><path d="M0.5 4.2 L4.1 4.2 L4.1 11.2 L5.3 11.2 L5.3 13.4 L0.2 13.4 L0.2 11.2 L1.7 11.2 L1.7 6.2 L0.5 6.2 Z"/></svg>
<div class="hl" style="top:351.00px"></div>
<div class="rn" style="top:356.88px">5</div>
<div class="td nm" style="left:74px;top:356.88px">Stark Fundamental Hoodie</div>
<div class="td" style="left:461px;top:356.88px">Purple / XL</div>
<div class="td dt" style="left:678px;top:356.88px">2022-02-17 02:48:16</div>
<div class="td dd" style="left:892px;top:356.88px">Aug 4, 2021</div>
<div class="td dd" style="left:1140px;top:356.88px">Mar 4, 2025</div>
<div class="td" style="right:37px;top:356.88px;text-align:right">183</div>
<svg class="ii" style="left:432.5px;top:357.20px" width="6" height="14" viewBox="0 0 6 14"><rect x="1.7" y="0.2" width="2.5" height="2.4" rx="0.4"/><path d="M0.5 4.2 L4.1 4.2 L4.1 11.2 L5.3 11.2 L5.3 13.4 L0.2 13.4 L0.2 11.2 L1.7 11.2 L1.7 6.2 L0.5 6.2 Z"/></svg>
<svg class="ii" style="left:645.5px;top:357.20px" width="6" height="14" viewBox="0 0 6 14"><rect x="1.7" y="0.2" width="2.5" height="2.4" rx="0.4"/><path d="M0.5 4.2 L4.1 4.2 L4.1 11.2 L5.3 11.2 L5.3 13.4 L0.2 13.4 L0.2 11.2 L1.7 11.2 L1.7 6.2 L0.5 6.2 Z"/></svg>
<div class="hl" style="top:398.75px"></div>
<div class="rn" style="top:404.62px">6</div>
<div class="td nm" style="left:74px;top:404.62px">Marco Lightweight Active Hoodie</div>
<div class="td" style="left:461px;top:404.62px">Blue / S</div>
<div class="td dt" style="left:678px;top:404.62px">2022-02-17 02:47:32</div>
<div class="td dd" style="left:892px;top:404.62px">Apr 26, 2021</div>
<div class="td dd" style="left:1140px;top:404.62px">Mar 13, 2025</div>
<div class="td" style="right:37px;top:404.62px;text-align:right">173</div>
<svg class="ii" style="left:432.5px;top:404.95px" width="6" height="14" viewBox="0 0 6 14"><rect x="1.7" y="0.2" width="2.5" height="2.4" rx="0.4"/><path d="M0.5 4.2 L4.1 4.2 L4.1 11.2 L5.3 11.2 L5.3 13.4 L0.2 13.4 L0.2 11.2 L1.7 11.2 L1.7 6.2 L0.5 6.2 Z"/></svg>
<svg class="ii" style="left:645.5px;top:404.95px" width="6" height="14" viewBox="0 0 6 14"><rect x="1.7" y="0.2" width="2.5" height="2.4" rx="0.4"/><path d="M0.5 4.2 L4.1 4.2 L4.1 11.2 L5.3 11.2 L5.3 13.4 L0.2 13.4 L0.2 11.2 L1.7 11.2 L1.7 6.2 L0.5 6.2 Z"/></svg>
<div class="hl" style="top:446.50px"></div>
<div class="rn" style="top:452.38px">7</div>
<div class="td nm" style="left:74px;top:452.38px">Montana Wind Jacket</div>
<div class="td" style="left:461px;top:452.38px">Green / L</div>
<div class="td dt" style="left:678px;top:452.38px">2022-02-17 02:46:40</div>
<div class="td dd" style="left:892px;top:452.38px">Jan 28, 2021</div>
<div class="td dd" style="left:1140px;top:452.38px">Mar 17, 2025</div>
<div class="td" style="right:37px;top:452.38px;text-align:right">169</div>
<svg class="ii" style="left:432.5px;top:452.70px" width="6" height="14" viewBox="0 0 6 14"><rect x="1.7" y="0.2" width="2.5" height="2.4" rx="0.4"/><path d="M0.5 4.2 L4.1 4.2 L4.1 11.2 L5.3 11.2 L5.3 13.4 L0.2 13.4 L0.2 11.2 L1.7 11.2 L1.7 6.2 L0.5 6.2 Z"/></svg>
<svg class="ii" style="left:645.5px;top:452.70px" width="6" height="14" viewBox="0 0 6 14"><rect x="1.7" y="0.2" width="2.5" height="2.4" rx="0.4"/><path d="M0.5 4.2 L4.1 4.2 L4.1 11.2 L5.3 11.2 L5.3 13.4 L0.2 13.4 L0.2 11.2 L1.7 11.2 L1.7 6.2 L0.5 6.2 Z"/></svg>
<div class="hl" style="top:494.25px"></div>
<div class="rn" style="top:500.12px">8</div>
<div class="td nm" style="left:74px;top:500.12px">Montana Wind Jacket</div>
<div class="td" style="left:461px;top:500.12px">Red / XS</div>
<div class="td dt" style="left:678px;top:500.12px">2022-02-17 02:46:40</div>
<div class="td dd" style="left:892px;top:500.12px">Apr 17, 2021</div>
<div class="td dd" style="left:1140px;top:500.12px">Mar 19, 2025</div>
<div class="td" style="right:37px;top:500.12px;text-align:right">167</div>
<svg class="ii" style="left:432.5px;top:500.45px" width="6" height="14" viewBox="0 0 6 14"><rect x="1.7" y="0.2" width="2.5" height="2.4" rx="0.4"/><path d="M0.5 4.2 L4.1 4.2 L4.1 11.2 L5.3 11.2 L5.3 13.4 L0.2 13.4 L0.2 11.2 L1.7 11.2 L1.7 6.2 L0.5 6.2 Z"/></svg>
<svg class="ii" style="left:645.5px;top:500.45px" width="6" height="14" viewBox="0 0 6 14"><rect x="1.7" y="0.2" width="2.5" height="2.4" rx="0.4"/><path d="M0.5 4.2 L4.1 4.2 L4.1 11.2 L5.3 11.2 L5.3 13.4 L0.2 13.4 L0.2 11.2 L1.7 11.2 L1.7 6.2 L0.5 6.2 Z"/></svg>
<div class="hl" style="top:542.00px"></div>
<div class="rn" style="top:547.88px">9</div>
<div class="td nm" style="left:74px;top:547.88px">Ajax Full-Zip Sweatshirt</div>
<div class="td" style="left:461px;top:547.88px">Blue / XS</div>
<div class="td dt" style="left:678px;top:547.88px">2022-02-17 02:47:38</div>
<div class="td dd" style="left:892px;top:547.88px">Feb 19, 2021</div>
<div class="td dd" style="left:1140px;top:547.88px">Mar 20, 2025</div>
<div class="td" style="right:37px;top:547.88px;text-align:right">166</div>
<svg class="ii" style="left:432.5px;top:548.20px" width="6" height="14" viewBox="0 0 6 14"><rect x="1.7" y="0.2" width="2.5" height="2.4" rx="0.4"/><path d="M0.5 4.2 L4.1 4.2 L4.1 11.2 L5.3 11.2 L5.3 13.4 L0.2 13.4 L0.2 11.2 L1.7 11.2 L1.7 6.2 L0.5 6.2 Z"/></svg>
<svg class="ii" style="left:645.5px;top:548.20px" width="6" height="14" viewBox="0 0 6 14"><rect x="1.7" y="0.2" width="2.5" height="2.4" rx="0.4"/><path d="M0.5 4.2 L4.1 4.2 L4.1 11.2 L5.3 11.2 L5.3 13.4 L0.2 13.4 L0.2 11.2 L1.7 11.2 L1.7 6.2 L0.5 6.2 Z"/></svg>
<div class="hl" style="top:589.75px"></div>
<div class="rn" style="top:595.62px">10</div>
<div class="td nm" style="left:74px;top:595.62px">Taurus Elements Shell</div>
<div class="td" style="left:461px;top:595.62px">White / XL</div>
<div class="td dt" style="left:678px;top:595.62px">2022-02-17 02:47:01</div>
<div class="td dd" style="left:892px;top:595.62px">Jan 12, 2021</div>
<div class="td dd" style="left:1140px;top:595.62px">Mar 25, 2025</div>
<div class="td" style="right:37px;top:595.62px;text-align:right">162</div>
<svg class="ii" style="left:432.5px;top:595.95px" width="6" height="14" viewBox="0 0 6 14"><rect x="1.7" y="0.2" width="2.5" height="2.4" rx="0.4"/><path d="M0.5 4.2 L4.1 4.2 L4.1 11.2 L5.3 11.2 L5.3 13.4 L0.2 13.4 L0.2 11.2 L1.7 11.2 L1.7 6.2 L0.5 6.2 Z"/></svg>
<svg class="ii" style="left:645.5px;top:595.95px" width="6" height="14" viewBox="0 0 6 14"><rect x="1.7" y="0.2" width="2.5" height="2.4" rx="0.4"/><path d="M0.5 4.2 L4.1 4.2 L4.1 11.2 L5.3 11.2 L5.3 13.4 L0.2 13.4 L0.2 11.2 L1.7 11.2 L1.7 6.2 L0.5 6.2 Z"/></svg>
<div class="hl" style="top:637.50px"></div>
<div class="rn" style="top:643.38px">11</div>
<div class="td nm" style="left:74px;top:643.38px">Typhon Performance Fleece-lined Jacket</div>
<div class="td" style="left:461px;top:643.38px">Black / L</div>
<div class="td dt" style="left:678px;top:643.38px">2022-02-17 02:46:50</div>
<div class="td dd" style="left:892px;top:643.38px">Jan 24, 2021</div>
<div class="td dd" style="left:1140px;top:643.38px">Mar 26, 2025</div>
<div class="td" style="right:37px;top:643.38px;text-align:right">160</div>
<svg class="ii" style="left:432.5px;top:643.70px" width="6" height="14" viewBox="0 0 6 14"><rect x="1.7" y="0.2" width="2.5" height="2.4" rx="0.4"/><path d="M0.5 4.2 L4.1 4.2 L4.1 11.2 L5.3 11.2 L5.3 13.4 L0.2 13.4 L0.2 11.2 L1.7 11.2 L1.7 6.2 L0.5 6.2 Z"/></svg>
<svg class="ii" style="left:645.5px;top:643.70px" width="6" height="14" viewBox="0 0 6 14"><rect x="1.7" y="0.2" width="2.5" height="2.4" rx="0.4"/><path d="M0.5 4.2 L4.1 4.2 L4.1 11.2 L5.3 11.2 L5.3 13.4 L0.2 13.4 L0.2 11.2 L1.7 11.2 L1.7 6.2 L0.5 6.2 Z"/></svg>
<div class="hl" style="top:685.25px"></div>
<div class="rn" style="top:691.12px">12</div>
<div class="td nm" style="left:74px;top:691.12px">Chaz Kangeroo Hoodie</div>
<div class="td" style="left:461px;top:691.12px">Orange / XS</div>
<div class="td dt" style="left:678px;top:691.12px">2022-02-17 02:48:43</div>
<div class="td dd" style="left:892px;top:691.12px">Oct 11, 2018</div>
<div class="td dd" style="left:1140px;top:691.12px">Mar 27, 2025</div>
<div class="td" style="right:37px;top:691.12px;text-align:right">160</div>
<svg class="ii" style="left:432.5px;top:691.45px" width="6" height="14" viewBox="0 0 6 14"><rect x="1.7" y="0.2" width="2.5" height="2.4" rx="0.4"/><path d="M0.5 4.2 L4.1 4.2 L4.1 11.2 L5.3 11.2 L5.3 13.4 L0.2 13.4 L0.2 11.2 L1.7 11.2 L1.7 6.2 L0.5 6.2 Z"/></svg>
<svg class="ii" style="left:645.5px;top:691.45px" width="6" height="14" viewBox="0 0 6 14"><rect x="1.7" y="0.2" width="2.5" height="2.4" rx="0.4"/><path d="M0.5 4.2 L4.1 4.2 L4.1 11.2 L5.3 11.2 L5.3 13.4 L0.2 13.4 L0.2 11.2 L1.7 11.2 L1.7 6.2 L0.5 6.2 Z"/></svg>
<div class="hl" style="top:733.00px"></div>
<div class="rn" style="top:738.88px">13</div>
<div class="td nm" style="left:74px;top:738.88px">Mona Pullover Hoodlie</div>
<div class="td" style="left:461px;top:738.88px">Green / S</div>
<div class="td dt" style="left:678px;top:738.88px">2022-02-17 02:44:45</div>
<div class="td dd" style="left:892px;top:738.88px">Mar 27, 2021</div>
<div class="td dd" style="left:1140px;top:738.88px">Mar 30, 2025</div>
<div class="td" style="right:37px;top:738.88px;text-align:right">157</div>
<svg class="ii" style="left:432.5px;top:739.20px" width="6" height="14" viewBox="0 0 6 14"><rect x="1.7" y="0.2" width="2.5" height="2.4" rx="0.4"/><path d="M0.5 4.2 L4.1 4.2 L4.1 11.2 L5.3 11.2 L5.3 13.4 L0.2 13.4 L0.2 11.2 L1.7 11.2 L1.7 6.2 L0.5 6.2 Z"/></svg>
<svg class="ii" style="left:645.5px;top:739.20px" width="6" height="14" viewBox="0 0 6 14"><rect x="1.7" y="0.2" width="2.5" height="2.4" rx="0.4"/><path d="M0.5 4.2 L4.1 4.2 L4.1 11.2 L5.3 11.2 L5.3 13.4 L0.2 13.4 L0.2 11.2 L1.7 11.2 L1.7 6.2 L0.5 6.2 Z"/></svg>
<div class="hl" style="top:780.75px"></div>
    <!-- column lines -->
    <div class="vl" style="left:59px;top:72px;height:727px"></div>
    <div class="vl" style="left:446px;top:72px;height:727px"></div>
    <div class="abs" style="left:660px;top:72px;width:4.5px;height:727px;background:#e3e3e3"></div>
    <div class="vl" style="left:877px;top:72px;height:709px"></div>
    <div class="vl" style="left:1125px;top:72px;height:709px"></div>
    <div class="vl" style="left:1372px;top:72px;height:709px"></div>
    <div class="vl" style="left:1597px;top:72px;height:709px"></div>
    <div class="vl" style="left:1606px;top:72px;height:713px"></div>
    <div class="abs" style="left:0;top:785px;width:1606px;height:1px;background:#ebebeb"></div>
    <!-- v scrollbar -->
    <div class="abs" style="left:1610.5px;top:165.5px;width:7.5px;height:26px;border-radius:4px;background:#d9dadd"></div>
    <!-- h scrollbar -->
    <div class="abs" style="left:668.5px;top:788px;width:649px;height:8px;border-radius:4px;background:#d9dadd"></div>
    <div class="abs" style="left:0;top:799px;width:1621px;height:1.2px;background:#e3e3e3"></div>
    <!-- header texts -->
    <div class="th1" style="left:74px;top:75px">PRODUCTS</div>
<div class="th2" style="left:74px;top:117.60000000000002px">Name</div>
<svg class="abs" style="left:415px;top:87px" width="16" height="16" viewBox="0 0 16 16"><path d="M1.8 4.8 L14.2 4.8 L8 11 Z" fill="#7a7f85"/></svg>
<div class="th1" style="left:461px;top:75px">PRODUCT VARIANTS</div>
<div class="th2" style="left:461px;top:117.60000000000002px">Name</div>
<svg class="abs" style="left:628px;top:87px" width="16" height="16" viewBox="0 0 16 16"><path d="M1.8 4.8 L14.2 4.8 L8 11 Z" fill="#7a7f85"/></svg>
<div class="th1" style="left:678px;top:75px">PRODUCT VARIANTS</div>
<div class="th2" style="left:678px;top:117.60000000000002px">Created At</div>
<svg class="abs" style="left:846px;top:87px" width="16" height="16" viewBox="0 0 16 16"><path d="M1.8 4.8 L14.2 4.8 L8 11 Z" fill="#7a7f85"/></svg>
<div class="th1" style="left:892px;top:75px">PRODUCT VARIANTS</div>
<div class="th2" style="left:892px;top:117.60000000000002px">First Ordered At</div>
<div class="sup" style="left:1034px;top:106.30000000000001px">Date</div>
<svg class="abs" style="left:1094px;top:87px" width="16" height="16" viewBox="0 0 16 16"><path d="M1.8 4.8 L14.2 4.8 L8 11 Z" fill="#7a7f85"/></svg>
<div class="th1" style="left:1140px;top:75px">PRODUCT VARIANTS</div>
<div class="th2" style="left:1140px;top:117.60000000000002px">Last Ordered At</div>
<div class="sup" style="left:1279px;top:106.30000000000001px">Date</div>
<svg class="abs" style="left:1340px;top:87px" width="16" height="16" viewBox="0 0 16 16"><path d="M1.8 4.8 L14.2 4.8 L8 11 Z" fill="#7a7f85"/></svg>
<div class="th1" style="left:1387px;top:75px">PRODUCT VARIANTS</div>
<div class="th2" style="left:1387px;top:117.60000000000002px">Last Ordered</div>
<div class="sup" style="left:1503px;top:106.30000000000001px">Days</div>
<svg class="abs" style="left:1566px;top:87px" width="16" height="16" viewBox="0 0 16 16"><path d="M1.8 4.8 L14.2 4.8 L8 11 Z" fill="#7a7f85"/></svg>
<svg class="abs" style="left:1560px;top:121px" width="30" height="26" viewBox="0 0 30 26"><path d="M1.1 4.2 L6.2 4.2 M1.1 12.4 L10 12.4 M1.1 20.3 L14.2 20.3" stroke="#777d86" stroke-width="2.6"/><path d="M22.2 5 L22.2 24" stroke="#777d86" stroke-width="2.6"/><path d="M17.1 5.8 L22.2 0.7 L27.3 5.8 Z" fill="#777d86"/></svg>
<div class="abs" style="left:73.39999999999998px;top:143.2px;width:13px;height:1.5px;background:#dcdcdc"></div>
    <div class="abs" style="left:37px;top:813px;line-height:36px;font-size:17.3px;color:#303030;-webkit-text-stroke:0.2px #303030;letter-spacing:0.15px">396 records</div>
  </div>
  <!-- chat bubbles -->
  <div class="abs" style="left:1888px;top:1045.5px;width:64px;height:64px;border-radius:50%;background:linear-gradient(90deg,#7d4cf2,#8a5cf7);box-shadow:0 4px 20px rgba(0,0,0,0.12)"></div>
  <div class="abs" style="left:1912px;top:1071px;width:10px;height:10px;background:#fff;transform:rotate(45deg)"></div>
  <div class="abs" style="left:1915px;top:1045.5px;width:64px;height:64px;border-radius:50%;background:#24663b;box-shadow:0 2px 12px rgba(0,0,0,0.15)"></div>
  <svg class="abs" style="left:1932.5px;top:1061.3px" width="29" height="33" viewBox="0 0 29 33"><path d="M4.2 0 L24.3 0 C26.6 0 28.5 1.9 28.5 4.2 L28.5 32.6 L20 28.6 L4.2 28.6 C1.9 28.6 0 26.7 0 24.4 L0 4.2 C0 1.9 1.9 0 4.2 0 Z" fill="#fff"/><path d="M4.3 20.6 C10 26 18.5 26 24 20.6" stroke="#24663b" stroke-width="1.9" fill="none" stroke-linecap="round"/></svg>
</div>
</body></html>
